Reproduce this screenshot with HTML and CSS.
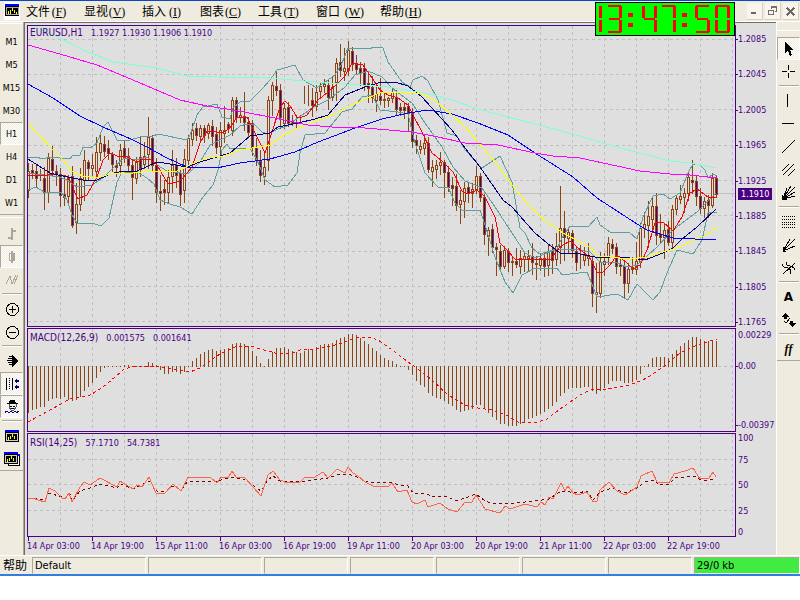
FILE: index.html
```html
<!DOCTYPE html>
<html lang="zh-CN">
<head>
<meta charset="utf-8">
<title>EURUSD,H1</title>
<link rel="stylesheet" href="styles.css">
</head>
<body>
<div class="app">
  <header class="menubar">
    <svg class="logo" viewBox="0 0 20 18" aria-hidden="true"><rect width="16" height="18" fill="#fff"/><rect x="1" y="2" width="14" height="12" fill="#000"/><rect x="1" y="2" width="14" height="2" fill="#00f"/><path d="M2 5.500H14V12.500H2Z" fill="none" stroke="#aaa"/><path d="M4.500 9V12M6.500 8V12M8.500 6V9M10.500 8V11M12.500 10V12" stroke="#ff0"/></svg>
    <nav class="menus">
      <button>文件<span class="key">(<u>F</u>)</span></button>
      <button>显视<span class="key">(<u>V</u>)</span></button>
      <button>插入<span class="key">(<u>I</u>)</span></button>
      <button>图表<span class="key">(<u>C</u>)</span></button>
      <button>工具<span class="key">(<u>T</u>)</span></button>
      <button>窗口<span class="key wide">(<u>W</u>)</span></button>
      <button>帮助<span class="key">(<u>H</u>)</span></button>
    </nav>
    <div class="winctl">
      <button aria-label="Minimize"><svg viewBox="0 0 16 16"><path d="M4 11H10" stroke="#6b6960" stroke-width="2"/></svg></button>
      <button aria-label="Restore"><svg viewBox="0 0 16 16"><path d="M6.500 6V4.500H12.500V9.500H11M3.500 7.500H9.500V12.500H3.500ZM6 4H13M3 8H10" fill="none" stroke="#6b6960"/></svg></button>
      <button aria-label="Close"><svg viewBox="0 0 16 16"><path d="M4 5L12 13M12 5L4 13" stroke="#6b6960" stroke-width="2"/></svg></button>
    </div>
    <div class="clock" role="timer" aria-label="13:47:50"><svg id="clock" viewBox="0 0 138 32"></svg></div>
  </header>

  <div class="workspace">
    <aside class="tools left">
      <div class="group periods">
        <button>M1</button><button>M5</button><button>M15</button><button>M30</button>
        <button class="on">H1</button><button>H4</button><button>D1</button><button>W1</button>
      </div>
      <div class="group">
        <button aria-label="Bar chart"><svg viewBox="0 0 16 16"><path d="M7 2H9V4H12V6H9V14H7V13H4V11H7Z" fill="#aca899"/></svg></button>
        <button class="on" aria-label="Candlesticks"><svg viewBox="0 0 16 16"><path d="M7 2H9V4H11V12H9V14H7V12H5V4H7Z" fill="#aca899"/><path d="M6.500 5V11" stroke="#fff"/></svg></button>
        <button aria-label="Line chart"><svg viewBox="0 0 16 16"><path d="M2 12L6 4L8 12L12 3M10 12L14 3" fill="none" stroke="#aca899"/></svg></button>
        <hr>
        <button aria-label="Zoom in"><svg viewBox="0 0 16 16"><circle cx="8.500" cy="8.500" r="6" fill="none" stroke="#000"/><path d="M5 8.500H12M8.500 5V12" stroke="#000"/></svg></button>
        <button aria-label="Zoom out"><svg viewBox="0 0 16 16"><circle cx="8.500" cy="8.500" r="6" fill="none" stroke="#000"/><path d="M5 8.500H12" stroke="#000"/></svg></button>
        <hr>
        <button aria-label="Auto scroll"><svg viewBox="0 0 16 16"><path d="M8 2L14 8L8 14Z"/><path d="M5 3.500H8M4 5.500H8M3 7.500H8M4 9.500H8M5 11.500H8" stroke="#000"/></svg></button>
        <button class="on" aria-label="Chart shift"><svg viewBox="0 0 16 16"><path d="M2.500 2V14M8.500 2V14" stroke="#000"/><path d="M5.500 2V14" stroke="#000" stroke-dasharray="1 1"/><path d="M10 5L13 2V4H15V6H13V8ZM10 11L13 8V10H15V12H13V14Z" fill="#00008b"/></svg></button>
        <button class="on" aria-label="Expert advisors"><svg viewBox="0 0 16 16"><path d="M5 4L6 1H11L12 4H14V5H3V4Z"/><path d="M5 5V8L7 11H10L12 8V5" fill="#eee" stroke="#555"/><path d="M6 7H8M9 7H11M7 9.500H10" stroke="#000"/><path d="M1 14L3 12L5 14L7 12L9 14L11 12L13 14L15 12M1 12H3M13 12H15" fill="none" stroke="#00008b"/></svg></button>
        <hr>
        <button aria-label="New chart"><svg viewBox="0 0 16 16"><rect x="1" y="2" width="14" height="12"/><rect x="1" y="2" width="14" height="2" fill="#00f"/><path d="M2.500 5.500H13.500V12.500H2.500Z" fill="none" stroke="#ccc"/><path d="M4.500 9V12M6.500 8V11M8.500 6V9M10.500 8V11" stroke="#ff0"/></svg></button>
        <button aria-label="Profiles"><svg viewBox="0 0 16 16"><path d="M4.500 4.500H15.500V14.500H4.500Z" fill="#fff" stroke="#000"/><rect x="14" y="3" width="2" height="2" fill="#00f"/><rect x="0" y="1" width="14" height="12"/><rect x="0" y="1" width="14" height="2" fill="#00f"/><path d="M1.500 4.500H12.500V11.500H1.500Z" fill="none" stroke="#ccc"/><path d="M3.500 8V11M5.500 7V10M7.500 5V8M9.500 7V10" stroke="#ff0"/></svg></button>
      </div>
    </aside>

    <main class="chart">
      <section class="panel">
        <div class="plot"><svg id="price" viewBox="28 26 707 300" preserveAspectRatio="none"></svg>
          <h1><span class="name">EURUSD,H1</span><span>1.1927 1.1930 1.1906 1.1910</span></h1></div>
        <div class="axis price-axis">
          <span>1.2085</span><span>1.2045</span><span>1.2005</span><span>1.1965</span><span>1.1925</span><span>1.1885</span><span>1.1845</span><span>1.1805</span><span>1.1765</span>
          <b class="last">1.1910</b>
        </div>
      </section>
      <section class="panel">
        <div class="plot"><svg id="macd" viewBox="28 329 707 102" preserveAspectRatio="none"></svg>
          <h2><span class="name">MACD(12,26,9)</span><span>0.001575</span><span>0.001641</span></h2></div>
        <div class="axis macd-axis"><span>0.00229</span><span>0.00</span><span>-0.00397</span></div>
      </section>
      <section class="panel">
        <div class="plot"><svg id="rsi" viewBox="28 434 707 102" preserveAspectRatio="none"></svg>
          <h2><span class="name">RSI(14,25)</span><span>57.1710</span><span>54.7381</span></h2></div>
        <div class="axis rsi-axis"><span>100</span><span>75</span><span>50</span><span>25</span><span>0</span></div>
      </section>
      <div class="times">
        <span>14 Apr 03:00</span><span>14 Apr 19:00</span><span>15 Apr 11:00</span><span>16 Apr 03:00</span><span>16 Apr 19:00</span><span>19 Apr 11:00</span><span>20 Apr 03:00</span><span>20 Apr 19:00</span><span>21 Apr 11:00</span><span>22 Apr 03:00</span><span>22 Apr 19:00</span>
      </div>
    </main>

    <aside class="tools right">
      <div class="group">
        <button class="on" aria-label="Cursor"><svg viewBox="0 0 16 16"><path d="M4 1V12L7 10L9 15L11 14L9 9H12Z"/></svg></button>
        <button aria-label="Crosshair"><svg viewBox="0 0 16 16"><path d="M7.500 1V6M7.500 9V14M1 7.500H6M9 7.500H14" stroke="#000"/></svg></button>
        <hr>
        <button aria-label="Vertical line"><svg viewBox="0 0 16 16"><path d="M6.500 1V14" stroke="#000"/></svg></button>
        <button aria-label="Horizontal line"><svg viewBox="0 0 16 16"><path d="M1 7.500H13" stroke="#000"/></svg></button>
        <button aria-label="Trendline"><svg viewBox="0 0 16 16"><path d="M1 14L14 1" stroke="#000"/></svg></button>
        <button aria-label="Channel"><svg viewBox="0 0 16 16"><path d="M1 9L8 2M2 13L13 2M7 14L14 7" stroke="#000"/></svg></button>
        <button aria-label="Gann fan"><svg viewBox="0 0 16 16"><path d="M2 14L6 3M2 14L10 1M2 14L14 2M2 14L14 7M2 14L14 11" stroke="#000"/><path d="M1 10V15H7Z"/></svg></button>
        <hr>
        <button aria-label="Fibonacci retracement"><svg viewBox="0 0 16 16"><path d="M1 2.500H14M1 5.500H14M1 8.500H14M1 10.500H14M1 13.500H14" stroke="#000" stroke-dasharray="1 1"/></svg></button>
        <button aria-label="Fibonacci fan"><svg viewBox="0 0 16 16"><path d="M2 14L14 2M2 14L9 2M2 14L14 9M2 10V14H5" fill="none" stroke="#000"/></svg></button>
        <button aria-label="Fibonacci arcs"><svg viewBox="0 0 16 16"><path d="M2 14L14 3M1 4Q2 8 7 8Q10 9 10 14M5 2Q5 6 9 6Q13 7 14 10" fill="none" stroke="#000"/></svg></button>
        <hr>
        <button class="glyph">A</button>
        <button aria-label="Arrows"><svg viewBox="0 0 16 16"><path d="M4 1L8 5L6 5V7H3V5H1ZM11 15L7 11H9V9H12V11H15Z"/><path d="M3 9L5 11L9 6" fill="none" stroke="#000"/></svg></button>
        <hr>
        <button class="glyph script">ff</button>
      </div>
    </aside>
  </div>

  <footer class="status">
    <span class="help">帮助</span><span class="cell">Default</span><span class="cell"></span><span class="cell"></span><span class="cell"></span><span class="cell"></span><span class="cell"></span><span class="cell"></span><span class="cell net">29/0 kb</span>
  </footer>
</div>
<script src="chart.js"></script>
</body>
</html>
```
FILE: styles.css
```css
* { box-sizing: border-box; }
body {
  margin: 0;
  background: #fff;
  color: #000;
  font-family: "DejaVu Sans Condensed", "DejaVu Sans", sans-serif;
  font-size: 9px;
  line-height: 10px;
}
button {
  margin: 0;
  padding: 0;
  border: 0;
  background: none;
  color: inherit;
  font: inherit;
}
svg { display: block; shape-rendering: crispEdges; }
.app { background: #efebde; border-top: 1px solid #0a46c8; border-bottom: 2px solid #317ee0; }

.menubar {
  position: relative;
  display: flex;
  align-items: center;
  height: 21px;
  padding: 0 0 0 4px;
  border-bottom: 1px solid #fff;
}
.logo { width: 20px; height: 18px; }
.menus { display: flex; flex: 1; gap: 16px; margin-left: 2px; }
.menus button {
  font-family: "Noto Sans CJK SC", sans-serif;
  font-size: 12px;
  line-height: 18px;
  white-space: nowrap;
}
.key {
  display: inline-block;
  width: 18px;
  text-align: center;
  font-family: "Liberation Serif", serif;
}
.wide { width: 24px; text-align: right; }
.winctl { display: flex; gap: 2px; margin-right: 1px; }
.winctl button {
  width: 16px;
  height: 17px;
  background: #f7f5ee;
  border-right: 1px solid #d8d2bd;
  border-bottom: 1px solid #d8d2bd;
}
.clock {
  position: absolute;
  top: 1px;
  right: 65px;
  z-index: 2;
  width: 140px;
  background: #0f0;
  border: 1px solid #000;
}

.workspace { display: flex; }
.tools { flex: none; width: 24px; }
.left { border-right: 1px solid #aca899; padding-top: 1px; }
.right { border-left: 1px solid #fff; padding-top: 8px; }
.group {
  display: flex;
  flex-direction: column;
  align-items: stretch;
  padding-top: 6px;
  border-top: 1px solid #fff;
  border-bottom: 1px solid #aca899;
}
.left .group + .group { padding-top: 4px; margin-top: 2px; }
.group button {
  display: flex;
  align-items: center;
  justify-content: center;
  height: 23px;
}
.group svg { width: 16px; height: 16px; }
.group .on {
  background: repeating-conic-gradient(#fff 0 25%, #efebde 0 50%) 0 0 / 2px 2px;
  border: 1px solid;
  border-color: #aca899 #fff #fff #aca899;
}
.group hr {
  width: 20px;
  height: 2px;
  margin: 2px auto;
  border: 0;
  background: #aca899;
  border-bottom: 1px solid #fff;
}
.group .glyph { font-family: "DejaVu Sans", sans-serif; font-size: 12px; font-weight: bold; }
.group .script { font-family: "Liberation Serif", serif; font-style: italic; }

.chart {
  flex: 1;
  min-width: 0;
  padding: 2px 0 0 2px;
  background: #dfdfdf;
  border-top: 1px solid #716f64;
  border-left: 1px solid #716f64;
  color: #4b0082;
}
.panel { display: grid; grid-template-columns: 1fr 40px; margin-bottom: 1px; }
.plot { position: relative; border: 1px solid #4b0082; }
.plot svg { width: 100%; }
#price { height: 300px; }
#macd, #rsi { height: 102px; }
.plot h1, .plot h2 {
  position: absolute;
  top: 2px;
  left: 2px;
  display: flex;
  gap: 8px;
  margin: 0;
  font-size: 9px;
  font-weight: normal;
  line-height: 10px;
  white-space: nowrap;
}
.plot h2 { top: 4px; }
.plot .name { font-size: 10px; }
.axis { position: relative; display: grid; }
.axis span, .last { padding-left: 2px; white-space: nowrap; }
.axis span { position: relative; }
.price-axis span::before, .macd-axis span + span::before {
  content: "";
  position: absolute;
  left: 0;
  top: 5px;
  width: 2px;
  height: 1px;
  background: #4b0082;
}
.price-axis { align-content: space-between; padding-top: 9px; }
.last {
  position: absolute;
  left: 2px;
  top: 54%;
  width: 34px;
  padding: 1px 3px;
  background: #4b0082;
  color: #fff;
  font-weight: normal;
}
.macd-axis { grid-template-rows: 31fr 59fr 10fr; padding: 2px 0; }
.rsi-axis { grid-template-rows: 22fr 25fr 26fr 21fr 10fr; }
.times { display: grid; grid-template-columns: repeat(11, 1fr); margin-right: 45px; height: 17px; padding-top: 3px; }
.times span { position: relative; white-space: nowrap; }
.times span::before {
  content: "";
  position: absolute;
  left: 1px;
  top: -4px;
  width: 1px;
  height: 4px;
  background: #4b0082;
}

.status {
  display: grid;
  grid-template-columns: 30px 114fr 114fr 84fr 84fr 84fr 84fr 84fr 106fr;
  gap: 2px;
  padding-top: 1px;
  border-top: 1px solid #fff;
  font-size: 11px;
  line-height: 15px;
}
.help { padding-left: 3px; font-family: "Noto Sans CJK SC", sans-serif; font-size: 12px; white-space: nowrap; }
.cell { padding-left: 2px; border: 1px solid; border-color: #aca899 #fff #efebde #aca899; }
.net { background: #42eb42; }
```
FILE: chart.js
```js
const NS = "http://www.w3.org/2000/svg";
const BROWN = "#8b4513";

function add(svg, tag, attrs) {
  const el = document.createElementNS(NS, tag);
  for (const k in attrs) el.setAttribute(k, attrs[k]);
  svg.appendChild(el);
}
const path = (svg, d, stroke, extra) => add(svg, "path", { d, stroke, fill: "none", ...extra });
const curve = (svg, pts, stroke, extra) => add(svg, "polyline", { points: pts, stroke, fill: "none", ...extra });
const barX = i => 28.5 + 4 * i;

function grid(svg, rows, top, bottom) {
  let d = "";
  for (let x = 60.5; x < 735; x += 32) d += `M${x} ${top}V${bottom}`;
  for (const y of rows) d += `M28 ${y + 0.5}H735`;
  path(svg, d, "#c0c0c0", { "stroke-dasharray": "3 3" });
}

// high, body top, body bottom, low, falling
const candles = `163,171,190,197,0 164,170,173,178,1 164,171,178,187,1 169,176,176,180,1 167,178,192,209,1 153,158,192,202,0 146,159,170,175,1 165,171,174,185,1
168,174,195,206,1 175,194,197,205,1 175,178,196,203,0 166,176,225,227,1 183,204,222,233,0 168,178,204,210,0 150,160,180,200,0 160,162,168,180,1
154,165,168,175,0 137,152,171,176,0 135,143,152,160,0 136,144,151,156,1 140,148,153,159,1 152,154,164,171,1 160,165,167,176,1 144,150,165,174,0
141,148,157,162,1 148,156,165,170,1 160,165,177,199,1 157,162,178,183,0 137,157,168,176,1 142,156,164,168,0 117,137,154,168,0 135,138,165,170,1
158,165,192,202,1 175,191,193,210,1 180,189,192,204,1 170,177,192,202,0 150,165,176,192,0 158,165,175,187,1 170,173,194,205,1 149,159,190,202,0
135,138,160,165,0 123,130,139,145,0 123,128,135,140,1 125,128,136,140,0 125,128,135,142,1 123,125,133,138,0 120,126,136,145,1 127,134,147,153,1
122,130,146,158,0 106,130,133,142,0 122,124,128,132,1 97,100,130,135,0 97,100,117,122,1 107,115,117,122,0 92,116,122,130,1 117,122,132,137,1
120,123,147,155,1 138,147,160,165,1 150,161,175,181,1 153,167,176,184,0 96,100,160,170,0 82,85,100,115,0 70,86,90,95,1 84,90,117,128,1
103,108,123,128,0 102,107,123,126,1 115,121,123,125,1 117,122,123,127,0 115,118,118,123,0 86,98,98,103,0 85,98,98,105,0 88,100,105,116,1
85,92,106,110,0 82,86,91,96,0 79,84,86,92,0 80,85,97,109,1 77,87,97,100,0 58,63,82,100,0 44,62,70,76,1 48,68,71,80,0
41,50,70,75,0 47,51,64,70,1 55,64,69,73,1 62,68,73,85,1 63,68,85,90,1 71,83,88,102,1 76,87,97,102,1 85,94,100,111,0
78,96,100,104,1 93,99,100,107,1 97,98,100,106,0 88,92,98,102,0 90,97,109,114,1 103,107,110,115,1 103,107,110,118,1 103,106,113,131,1
108,112,141,147,1 135,140,145,153,1 140,146,149,153,0 135,143,148,154,0 137,143,169,172,1 160,167,171,186,0 160,165,169,178,0 152,162,165,174,0
160,162,172,197,1 166,172,187,191,1 177,185,188,205,1 174,186,205,210,1 190,200,204,223,0 182,188,201,217,0 182,187,193,202,1 183,189,193,207,0
166,176,189,193,0 173,176,197,201,1 194,197,234,244,1 227,230,236,255,0 224,229,247,252,1 243,247,249,275,1 245,251,266,268,1 246,250,266,268,0
248,251,262,271,1 257,261,262,275,0 248,261,264,267,1 250,258,266,273,0 251,256,259,271,0 250,256,258,270,0 243,256,262,274,1 256,263,264,279,0
253,258,265,270,0 253,258,266,276,1 245,252,265,275,0 244,251,260,273,1 233,246,259,265,0 186,228,247,263,0 211,228,237,260,1 227,232,238,252,0
230,233,250,257,1 247,251,262,270,1 245,261,261,268,0 247,255,260,265,0 243,256,258,265,0 256,261,293,306,1 263,292,294,312,0 252,262,293,297,0
253,261,264,275,0 237,243,256,264,0 239,244,248,253,1 243,247,266,273,1 257,264,266,275,1 261,266,283,298,1 263,269,283,292,0 257,267,269,273,0
242,261,269,274,0 223,228,262,267,0 212,224,228,237,0 201,216,225,247,0 196,206,219,232,0 193,206,235,244,1 214,234,237,242,1 223,230,237,258,0
221,229,242,245,1 205,209,242,247,0 195,198,209,214,0 185,196,199,203,0 188,193,197,212,0 172,177,193,200,0 160,180,182,193,1 176,181,196,205,1
188,196,208,213,1 197,201,208,217,0 195,200,205,217,1 173,178,205,207,0 175,178,194,197,1`.split(/\s+/).map(c => c.split(",").map(Number));

const price = document.getElementById("price");
grid(price, [39, 74, 109, 145, 180, 215, 251, 286, 321], 26, 326);
path(price, "M28 193.5H735", "#c0c0c0");
candles.forEach(([hi, top, bottom, lo, falling], i) => {
  path(price, `M${barX(i)} ${hi}V${lo + 1}`, BROWN);
  add(price, "rect", {
    x: barX(i) - 1, y: top + 0.5, width: 2, height: bottom - top,
    fill: falling ? "#4b0082" : "#dfdfdf", stroke: BROWN
  });
});

const TEAL = "#5f9ea0";
curve(price, "28,157 37,157 42,159 50,157 70,159 73,155 80,155 83,147 90,148 97,143 103,127 108,122 112,130 117,140 130,140 140,137 153,136 158,134 187,140 190,135 197,115 203,107 217,104 222,117 230,119 233,108 240,102 250,101 263,88 270,80 277,70 295,65 303,80 317,88 325,82 335,75 342,63 348,48 368,49 375,47 383,48 388,62 402,82 410,87 413,80 422,76 428,81 438,100 447,133 457,136 465,150 482,168 500,156 512,182 520,228 525,233 532,248 540,254 557,249 562,238 570,226 588,227 597,217 600,225 610,232 630,233 637,239 643,217 653,196 663,194 670,199 680,193 688,173 693,164 700,165 705,170 708,178 713,174 717,176", TEAL);
curve(price, "28,173 44,175 59,177 67,180 77,187 92,185 104,177 114,167 124,158 137,160 147,157 157,165 167,171 188,174 200,162 210,145 230,135 240,126 247,124 255,125 262,132 268,134 280,128 285,127 298,118 312,108 328,100 345,87 355,75 368,71 382,77 392,88 412,103 425,123 442,147 453,167 465,181 482,188 495,207 512,233 525,253 535,258 540,256 557,249 573,249 590,252 600,262 617,263 627,267 637,265 657,247 673,230 697,212 716,193", TEAL);
curve(price, "28,190 36,187 44,192 61,192 67,200 72,215 77,223 92,223 101,226 109,218 113,200 117,182 121,174 130,172 137,172 147,178 154,184 160,200 170,204 180,207 192,214 203,197 213,185 218,170 222,150 227,144 230,149 250,148 257,160 265,180 275,187 288,185 297,173 300,153 305,135 325,133 342,112 352,109 362,97 372,95 380,110 398,112 408,114 415,143 425,173 438,187 448,187 455,203 462,210 480,210 485,225 495,257 505,282 513,293 522,275 535,268 557,268 562,275 587,272 597,297 617,294 628,300 637,284 653,300 660,292 667,273 677,250 693,254 702,240 708,213 717,212", TEAL);
curve(price, "28,175 45,176 50,174 66,176 72,183 75,193 78,199 87,195 97,177 103,160 110,153 117,156 127,157 137,162 143,159 150,159 157,165 168,184 177,182 182,179 192,167 200,143 207,131 217,132 222,133 230,128 237,117 247,117 252,127 265,153 272,132 280,107 285,101 290,106 297,117 300,118 307,115 318,100 328,92 337,84 345,76 352,63 363,65 372,78 380,90 388,95 398,98 408,105 413,115 422,132 432,153 442,161 453,172 462,191 468,194 477,190 485,197 495,217 500,243 505,248 515,259 535,259 550,260 560,247 570,241 583,252 590,258 597,272 603,272 610,265 617,255 627,263 633,269 640,265 647,250 655,223 663,222 673,231 682,217 690,193 697,189 708,197 717,197", "#f00");
curve(price, "28,84 53,98 80,116 103,127 133,140 147,147 167,158 187,167 217,168 240,163 270,159 295,152 318,142 342,133 355,128 382,119 408,113 428,110 452,114 478,123 508,135 535,153 573,177 597,198 637,224 647,230 673,238 716,240", "#00f");
curve(price, "28,159 50,173 58,175 83,180 97,180 110,174 123,171 137,171 157,162 170,164 187,167 200,162 230,153 250,136 270,133 278,127 298,123 315,119 328,115 345,95 365,87 378,83 395,82 408,86 422,97 432,108 452,130 465,148 480,167 503,200 512,207 535,233 547,243 560,253 580,254 600,258 623,257 645,260 663,253 673,248 682,239 697,227 716,209", "#000080");
curve(price, "28,123 37,133 53,150 63,160 73,172 83,176 97,178 110,174 133,173 150,171 177,171 190,165 207,158 223,156 240,150 270,145 285,134 305,125 332,115 352,105 368,98 382,92 412,92 425,95 438,103 452,115 465,127 478,142 495,162 512,185 530,207 547,222 563,233 580,242 590,247 598,256 610,257 630,259 647,257 663,252 680,247 697,238 707,235 717,227", "#ff0");
curve(price, "28,45 60,54 97,65 133,80 180,100 207,106 233,110 270,117 308,125 332,127 365,128 412,132 438,137 465,143 498,145 535,153 553,156 580,158 640,171 670,174 690,175 717,178", "#f0f");
curve(price, "35,27 50,33 83,50 113,62 157,68 187,76 217,77 270,78 315,82 362,85 388,87 425,93 452,100 478,109 512,118 535,124 573,134 613,146 670,161 690,163 716,168", "#7fffd4");

const macd = document.getElementById("macd");
const macdEnds = [413,410,409,407,407,401,399,398,399,397,400,401,400,397,391,387,383,378,372,368,367,367,367,367,365,365,367,367,367,366,362,363,365,370,374,374,372,372,374,372,367,
361,358,354,352,350,349,351,350,349,348,344,343,343,344,346,351,356,363,366,
359,352,348,348,347,349,351,352,353,351,349,349,347,345,344,344,343,340,338,337,334,334,335,338,341,344,348,351,355,358,360,361,364,366,367,370,375,381,385,387,
393,396,398,399,401,404,406,410,412,411,410,409,405,405,409,413,417,420,424,424,426,426,426,424,422,419,418,
416,414,412,409,406,402,396,393,389,388,388,388,387,387,391,394,391,388,384,381,381,381,383,383,382,380,374,367,364,358,357,357,357,358,354,350,346,343,340,337,337,339,341,341,340,341];
grid(macd, [366], 329, 431);
path(macd, macdEnds.map((y, i) => `M${barX(i)} ${y > 366 ? 366 : 367}V${y}`).join(""), BROWN);
curve(macd, "28,422 50,410 70,399 90,395 97,391 107,384 123,370 130,367 150,366 167,368 190,372 200,368 207,363 220,354 235,347 250,346 268,351 275,353 293,353 300,350 317,349 332,346 345,342 357,337 368,337 378,340 395,352 408,362 418,369 432,380 448,395 465,405 478,408 492,410 508,416 518,422 535,423 547,419 563,407 580,395 590,390 607,389 630,385 647,378 663,367 680,353 697,345 707,342 717,339", "#f00", { "stroke-dasharray": "3 3" });

const rsi = document.getElementById("rsi");
grid(rsi, [459, 484, 510], 434, 536);
curve(rsi, "28,498 45,500 49,493 62,497 65,499 70,494 72,501 80,491 90,488 100,484 117,488 120,484 133,489 149,481 157,491 165,492 173,486 181,490 188,481 217,482 221,480 232,477 245,480 261,491 268,480 273,476 280,481 300,482 328,478 337,475 348,474 360,478 370,483 392,482 398,485 408,486 413,493 427,494 432,497 445,496 457,501 465,498 476,494 485,501 495,504 515,503 535,501 549,499 561,491 578,493 587,491 593,500 600,492 612,488 625,493 637,488 645,482 655,480 658,485 669,484 675,478 695,476 701,480 709,480 716,479", "#800000", { "stroke-dasharray": "3 3" });
curve(rsi, "28,498 33,498 38,500 45,502 49,488 55,491 62,498 65,499 69,493 72,502 80,487 84,482 90,485 100,478 117,487 120,481 133,489 137,485 142,487 149,477 156,493 165,493 173,484 181,491 188,477 210,477 217,483 221,477 228,478 232,471 236,477 245,478 261,496 268,475 273,471 280,480 288,483 300,482 305,477 313,478 323,472 328,478 337,469 345,473 348,467 353,473 358,476 365,482 373,486 388,487 392,483 398,492 407,490 412,502 417,504 425,500 428,507 440,503 448,509 457,512 465,502 472,502 476,495 485,509 500,513 505,506 510,509 525,504 537,507 541,502 545,505 549,497 553,499 561,483 565,491 568,486 573,493 578,495 587,492 593,502 597,501 600,490 609,482 617,491 625,495 637,487 641,476 652,471 657,482 669,483 674,474 685,471 693,468 700,479 709,478 713,472 716,477", "#ff6347");

// Seven-segment display: a top, b/c right, d bottom, e/f left, g middle
const clock = document.getElementById("clock");
const segments = {
  a: [1, 0, 13, 2], b: [12, 1, 3, 12], c: [12, 15, 3, 12], d: [1, 26, 13, 2],
  e: [0, 15, 3, 12], f: [0, 1, 3, 12], g: [2, 13, 11, 2]
};
const lit = { 0: "abcdef", 1: "bc", 3: "abcdg", 4: "bcfg", 5: "acdfg", 7: "abc" };
[[-10, 1], [10, 3], [45, 4], [64, 7], [98, 5], [118, 0]].forEach(([x, n]) => {
  for (const s of lit[n]) {
    const [sx, sy, width, height] = segments[s];
    add(clock, "rect", { x: x + sx + 1, y: sy + 2, width, height, fill: "#f00" });
  }
});
for (const x of [32, 86]) for (const y of [10, 20]) add(clock, "rect", { x, y, width: 5, height: 4, fill: "#f00" });
```
